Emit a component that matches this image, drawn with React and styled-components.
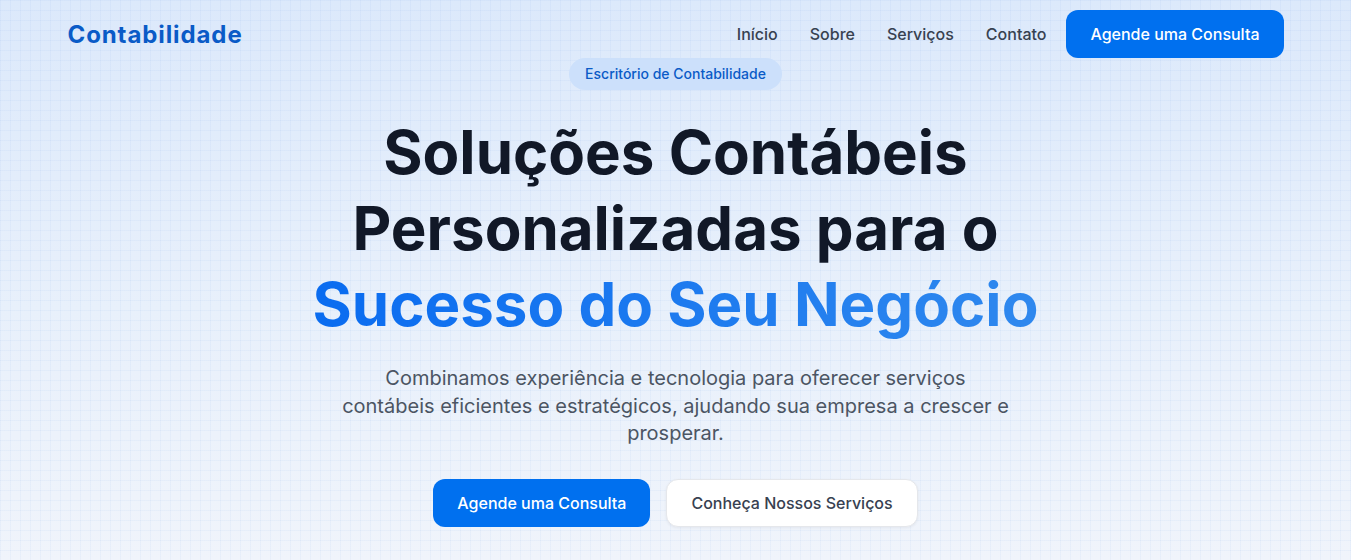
import React from "react";
import styled, { createGlobalStyle } from "styled-components";

const GlobalStyle = createGlobalStyle`
  * {
    box-sizing: border-box;
  }
  body {
    margin: 0;
    font-family: "Inter", "Liberation Sans", sans-serif;
    -webkit-font-smoothing: antialiased;
  }
`;

const Page = styled.div`
  min-height: 560px;
  background-color: #e6effb;
  background-image:
    linear-gradient(rgba(96, 150, 235, 0.06) 1px, transparent 1px),
    linear-gradient(90deg, rgba(96, 150, 235, 0.06) 1px, transparent 1px),
    linear-gradient(180deg, #dce9fb 0%, #e8f0fb 55%, #f0f4fb 100%);
  background-size: 10px 10px, 10px 10px, 100% 100%;
`;

const Container = styled.div`
  max-width: 1280px;
  margin: 0 auto;
  padding: 0 32px;
`;

const Header = styled.header`
  display: flex;
  align-items: center;
  justify-content: space-between;
  padding-top: 10px;
`;

const Logo = styled.a`
  font-family: "Inter", sans-serif;
  font-size: 24px;
  font-weight: 700;
  color: #0a5bc7;
  letter-spacing: 0.9px;
  text-decoration: none;
`;

const Nav = styled.nav`
  display: flex;
  align-items: center;
  gap: 8px;
`;

const NavLink = styled.a`
  padding: 0 12px;
  font-size: 16px;
  font-weight: 500;
  color: #374151;
  text-decoration: none;
`;

const Button = styled.a`
  display: inline-flex;
  align-items: center;
  justify-content: center;
  height: 48px;
  padding: 0 24px;
  border-radius: 12px;
  font-size: 16px;
  font-weight: 500;
  text-decoration: none;
  background: ${(p) => (p.$outline ? "#ffffff" : "#0070ef")};
  color: ${(p) => (p.$outline ? "#374151" : "#ffffff")};
  border: ${(p) => (p.$outline ? "1px solid #e5e7eb" : "none")};
  box-shadow: ${(p) =>
    p.$outline ? "0 1px 3px rgba(15, 23, 42, 0.06)" : "none"};
`;

const Hero = styled.section`
  display: flex;
  flex-direction: column;
  align-items: center;
  text-align: center;
`;

const Badge = styled.span`
  display: inline-block;
  padding: 6px 16px;
  border-radius: 999px;
  background: #cce0fb;
  color: #0a5bc7;
  font-size: 14px;
  font-weight: 500;
  line-height: 20px;
`;

const Title = styled.h1`
  margin: 24px 0 0;
  font-family: "Inter", sans-serif;
  font-size: 60px;
  font-weight: 700;
  line-height: 76px;
  color: #111827;
`;

const Highlight = styled.span`
  background: linear-gradient(90deg, #0a6cf0 0%, #2f88ee 100%);
  -webkit-background-clip: text;
  background-clip: text;
  color: transparent;
`;

const Lead = styled.p`
  max-width: 672px;
  margin: 23px 0 0;
  font-size: 20px;
  line-height: 27.5px;
  color: #4b5563;
`;

const Actions = styled.div`
  display: flex;
  align-items: center;
  gap: 16px;
  margin-top: 31px;
`;

export default function App() {
  return (
    <Page>
      <GlobalStyle />
      <Container>
        <Header>
          <Logo href="#">Contabilidade</Logo>
          <Nav>
            <NavLink href="#">Início</NavLink>
            <NavLink href="#">Sobre</NavLink>
            <NavLink href="#">Serviços</NavLink>
            <NavLink href="#">Contato</NavLink>
            <Button href="#">Agende uma Consulta</Button>
          </Nav>
        </Header>
        <Hero>
          <Badge>Escritório de Contabilidade</Badge>
          <Title>
            Soluções Contábeis
            <br />
            Personalizadas para o
            <br />
            <Highlight>Sucesso do Seu Negócio</Highlight>
          </Title>
          <Lead>
            Combinamos experiência e tecnologia para oferecer serviços
            contábeis eficientes e estratégicos, ajudando sua empresa a
            crescer e prosperar.
          </Lead>
          <Actions>
            <Button href="#">Agende uma Consulta</Button>
            <Button href="#" $outline>
              Conheça Nossos Serviços
            </Button>
          </Actions>
        </Hero>
      </Container>
    </Page>
  );
}
